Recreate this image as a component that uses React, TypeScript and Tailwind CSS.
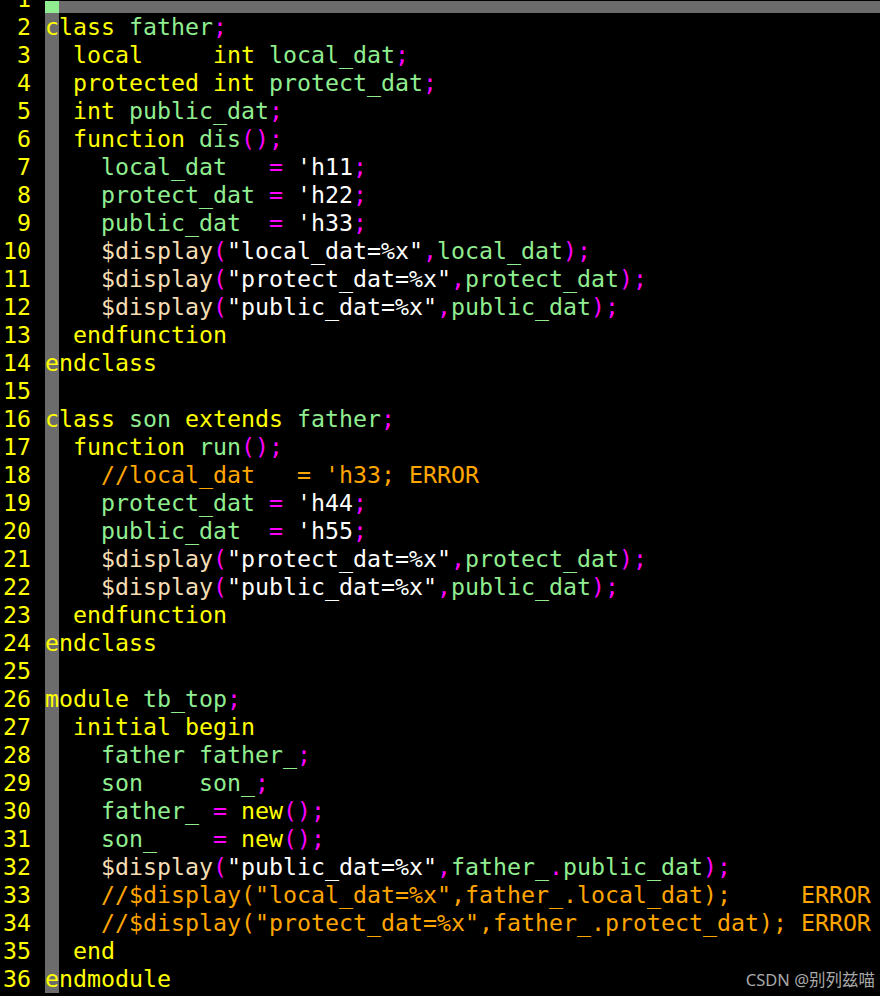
type Tok = [string, string];

const Y = "text-[#ffff00]";
const G = "text-[#90ee90]";
const M = "text-[#ff00ff]";
const W = "text-white";
const T = "text-[#f5deb3]";
const O = "text-[#ffa500]";
const N = "";

const lines: Tok[][] = [
  [[Y, "class"], [N, " "], [G, "father"], [M, ";"]],
  [[N, "  "], [Y, "local"], [N, "     "], [Y, "int"], [N, " "], [G, "local_dat"], [M, ";"]],
  [[N, "  "], [Y, "protected"], [N, " "], [Y, "int"], [N, " "], [G, "protect_dat"], [M, ";"]],
  [[N, "  "], [Y, "int"], [N, " "], [G, "public_dat"], [M, ";"]],
  [[N, "  "], [Y, "function"], [N, " "], [G, "dis"], [M, "();"]],
  [[N, "    "], [G, "local_dat"], [N, "   "], [M, "="], [N, " "], [W, "'h11"], [M, ";"]],
  [[N, "    "], [G, "protect_dat"], [N, " "], [M, "="], [N, " "], [W, "'h22"], [M, ";"]],
  [[N, "    "], [G, "public_dat"], [N, "  "], [M, "="], [N, " "], [W, "'h33"], [M, ";"]],
  [[N, "    "], [T, "$display"], [M, "("], [W, '"local_dat=%x"'], [M, ","], [G, "local_dat"], [M, ");"]],
  [[N, "    "], [T, "$display"], [M, "("], [W, '"protect_dat=%x"'], [M, ","], [G, "protect_dat"], [M, ");"]],
  [[N, "    "], [T, "$display"], [M, "("], [W, '"public_dat=%x"'], [M, ","], [G, "public_dat"], [M, ");"]],
  [[N, "  "], [Y, "endfunction"]],
  [[Y, "endclass"]],
  [],
  [[Y, "class"], [N, " "], [G, "son"], [N, " "], [Y, "extends"], [N, " "], [G, "father"], [M, ";"]],
  [[N, "  "], [Y, "function"], [N, " "], [G, "run"], [M, "();"]],
  [[N, "    "], [O, "//local_dat   = 'h33; ERROR"]],
  [[N, "    "], [G, "protect_dat"], [N, " "], [M, "="], [N, " "], [W, "'h44"], [M, ";"]],
  [[N, "    "], [G, "public_dat"], [N, "  "], [M, "="], [N, " "], [W, "'h55"], [M, ";"]],
  [[N, "    "], [T, "$display"], [M, "("], [W, '"protect_dat=%x"'], [M, ","], [G, "protect_dat"], [M, ");"]],
  [[N, "    "], [T, "$display"], [M, "("], [W, '"public_dat=%x"'], [M, ","], [G, "public_dat"], [M, ");"]],
  [[N, "  "], [Y, "endfunction"]],
  [[Y, "endclass"]],
  [],
  [[Y, "module"], [N, " "], [G, "tb_top"], [M, ";"]],
  [[N, "  "], [Y, "initial begin"]],
  [[N, "    "], [G, "father father_"], [M, ";"]],
  [[N, "    "], [G, "son    son_"], [M, ";"]],
  [[N, "    "], [G, "father_"], [N, " "], [M, "="], [N, " "], [Y, "new"], [M, "();"]],
  [[N, "    "], [G, "son_"], [N, "    "], [M, "="], [N, " "], [Y, "new"], [M, "();"]],
  [[N, "    "], [T, "$display"], [M, "("], [W, '"public_dat=%x"'], [M, ","], [G, "father_"], [M, "."], [G, "public_dat"], [M, ");"]],
  [[N, "    "], [O, '//$display("local_dat=%x",father_.local_dat);     ERROR']],
  [[N, "    "], [O, '//$display("protect_dat=%x",father_.protect_dat); ERROR']],
  [[N, "  "], [Y, "end"]],
  [[Y, "endmodule"]],
];

export default function App() {
  return (
    <div
      className="relative w-[880px] h-[996px] bg-black overflow-hidden text-[23.25px] leading-[28px] whitespace-pre"
      style={{ fontFamily: '"DejaVu Sans Mono", monospace' }}
    >
      {/* line 1: only its lower part is visible, cursor line */}
      <div className="flex h-[13px] overflow-hidden">
        <div className="w-[45px] shrink-0 text-right pr-[14px] text-[#ffff00] -mt-[15px]">1</div>
        <div className="flex-1 mt-[1px] h-[12px] bg-[#6c6c6c]">
          <div className="w-[14px] h-full bg-[#90ee90]" />
        </div>
      </div>

      {lines.map((toks, i) => (
        <div key={i} className="flex h-[28px]">
          <div className="w-[45px] shrink-0 text-right pr-[14px] text-[#ffff00]">{i + 2}</div>
          <div className="flex-1 bg-[linear-gradient(to_right,#6c6c6c_14px,transparent_14px)]">
            {toks.map(([c, t], j) => (
              <span key={j} className={c}>
                {t}
              </span>
            ))}
          </div>
        </div>
      ))}

      <div
        className="absolute right-[5px] bottom-[6px] text-[16.5px] leading-[20px] text-[#a8a8a8]"
        style={{ fontFamily: '"Noto Sans", "Noto Sans CJK SC", sans-serif' }}
      >
        CSDN @别列兹喵
      </div>
    </div>
  );
}
